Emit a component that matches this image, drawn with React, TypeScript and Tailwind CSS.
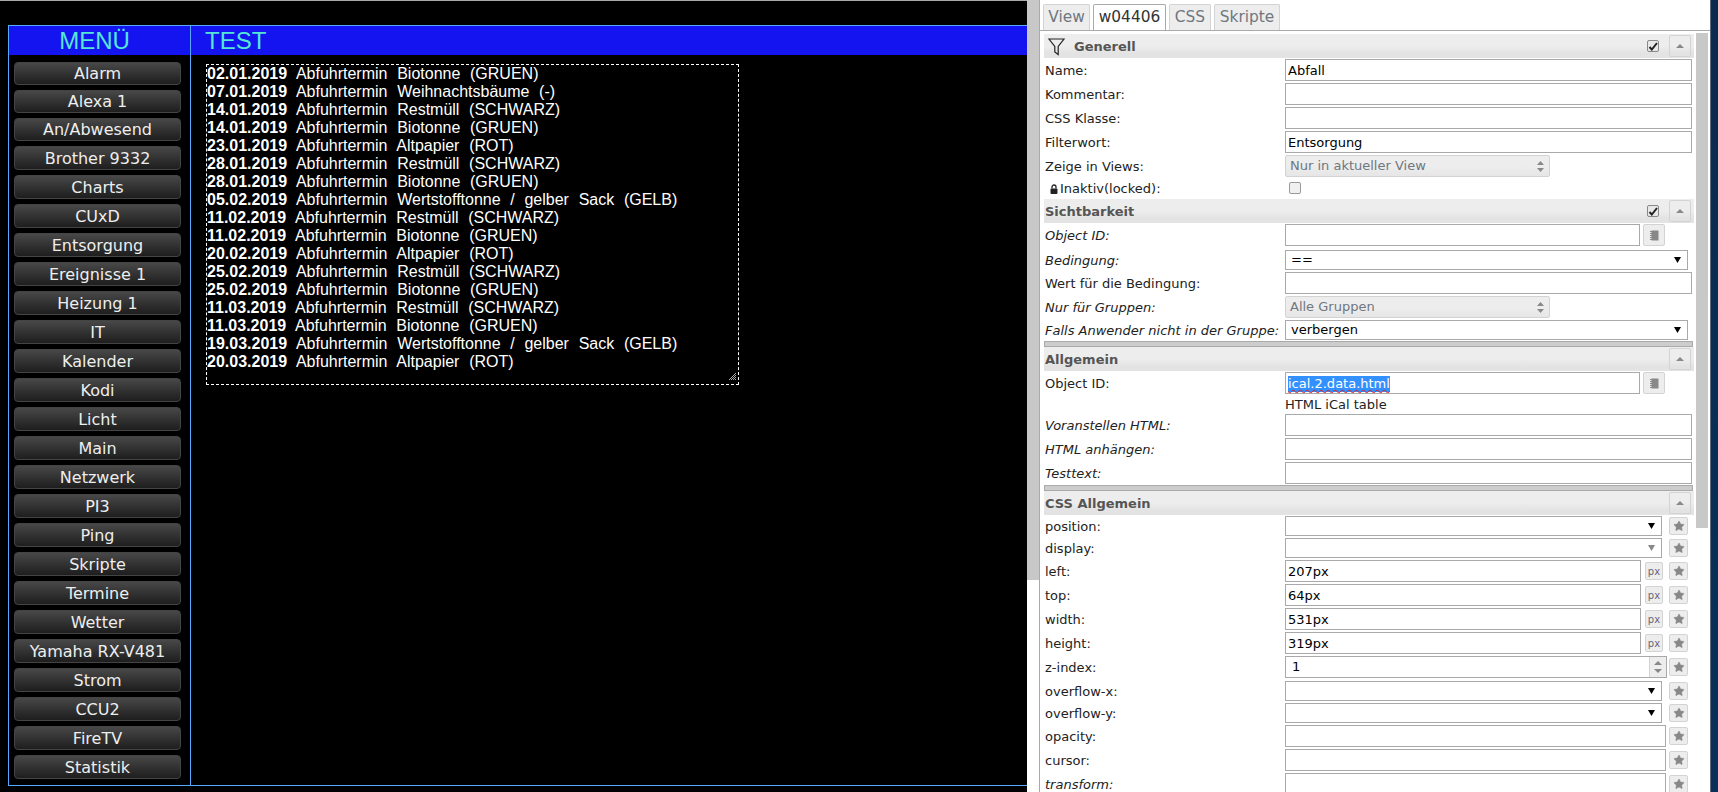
import type { ReactNode } from "react";
import { Star } from "lucide-react";

const MENU_ITEMS = [
  "Alarm",
  "Alexa 1",
  "An/Abwesend",
  "Brother 9332",
  "Charts",
  "CUxD",
  "Entsorgung",
  "Ereignisse 1",
  "Heizung 1",
  "IT",
  "Kalender",
  "Kodi",
  "Licht",
  "Main",
  "Netzwerk",
  "PI3",
  "Ping",
  "Skripte",
  "Termine",
  "Wetter",
  "Yamaha RX-V481",
  "Strom",
  "CCU2",
  "FireTV",
  "Statistik",
];

const DATES = [
  ["02.01.2019", "Biotonne  (GRUEN)"],
  ["07.01.2019", "Weihnachtsbäume  (-)"],
  ["14.01.2019", "Restmüll  (SCHWARZ)"],
  ["14.01.2019", "Biotonne  (GRUEN)"],
  ["23.01.2019", "Altpapier  (ROT)"],
  ["28.01.2019", "Restmüll  (SCHWARZ)"],
  ["28.01.2019", "Biotonne  (GRUEN)"],
  ["05.02.2019", "Wertstofftonne  /  gelber  Sack  (GELB)"],
  ["11.02.2019", "Restmüll  (SCHWARZ)"],
  ["11.02.2019", "Biotonne  (GRUEN)"],
  ["20.02.2019", "Altpapier  (ROT)"],
  ["25.02.2019", "Restmüll  (SCHWARZ)"],
  ["25.02.2019", "Biotonne  (GRUEN)"],
  ["11.03.2019", "Restmüll  (SCHWARZ)"],
  ["11.03.2019", "Biotonne  (GRUEN)"],
  ["19.03.2019", "Wertstofftonne  /  gelber  Sack  (GELB)"],
  ["20.03.2019", "Altpapier  (ROT)"],
];

function SmallButton({ children, className }: { children: ReactNode; className: string }) {
  return (
    <div
      className={`flex shrink-0 items-center justify-center rounded-[2px] border border-[#d3d3d3] bg-[#ededed] text-[#888] ${className}`}
    >
      {children}
    </div>
  );
}

function StarButton() {
  return (
    <SmallButton className="ml-auto mr-[6px] h-[18px] w-[19px]">
      <Star size={12} fill="#888" strokeWidth={1} />
    </SmallButton>
  );
}

function NoteButton() {
  return (
    <SmallButton className="ml-[3px] h-[22px] w-[22px]">
      <svg width="9" height="11" viewBox="0 0 9 11">
        <rect x="1.5" y="0.5" width="7" height="10" fill="#888" />
        <path d="M0 1.5h2M0 3.5h2M0 5.5h2M0 7.5h2M0 9.5h2" stroke="#888" strokeWidth="1" />
      </svg>
    </SmallButton>
  );
}

function Caret({ color = "#000" }: { color?: string }) {
  return (
    <svg width="7" height="6" viewBox="0 0 7 6" className="shrink-0">
      <polygon points="0,0 7,0 3.5,6" fill={color} />
    </svg>
  );
}

function TextField({ value, width, selected }: { value?: string; width: string; selected?: boolean }) {
  return (
    <div
      className={`flex h-[22px] shrink-0 items-center border border-[#a9a9a9] bg-white pl-[2px] pt-[1px] text-[13px] leading-[16px] text-black ${width}`}
    >
      {selected ? (
        <span className="bg-[#3390ff] text-white underline decoration-[#e02020] decoration-wavy decoration-1">
          {value}
        </span>
      ) : (
        value
      )}
    </div>
  );
}

function NativeSelect({ value, width, caret }: { value?: string; width: string; caret?: string }) {
  return (
    <div
      className={`flex h-[20px] shrink-0 items-center justify-between border border-[#a9a9a9] bg-white pl-[5px] pr-[6px] text-[13px] leading-[16px] text-black ${width}`}
    >
      <span>{value}</span>
      <Caret color={caret} />
    </div>
  );
}

function UiSelect({ value }: { value: string }) {
  return (
    <div className="flex h-[22px] w-[265px] shrink-0 items-center justify-between rounded-[2px] border border-[#d3d3d3] bg-gradient-to-b from-[#ededed] from-50% to-[#e6e6e6] pl-[4px] pr-[3px] text-[13px] leading-[16px] text-[#6f7780]">
      <span>{value}</span>
      <svg width="7" height="11" viewBox="0 0 7 11" className="mr-[2px]">
        <polygon points="3.5,0 7,4 0,4" fill="#888" />
        <polygon points="0,7 7,7 3.5,11" fill="#888" />
      </svg>
    </div>
  );
}

function Row({
  label,
  italic,
  className = "mt-[2px]",
  children,
}: {
  label: ReactNode;
  italic?: boolean;
  className?: string;
  children?: ReactNode;
}) {
  return (
    <div className={`flex items-center ${className}`}>
      <div
        className={`w-[241px] shrink-0 pl-[1px] pt-[1px] text-[13px] leading-[18px] text-[#222] ${
          italic ? "italic" : ""
        }`}
      >
        {label}
      </div>
      {children}
    </div>
  );
}

function SectionHeader({
  title,
  checked,
  filter,
  className = "",
}: {
  title: string;
  checked?: boolean;
  filter?: boolean;
  className?: string;
}) {
  return (
    <div
      className={`flex h-[24px] items-center bg-gradient-to-b from-[#ededed] from-50% to-[#e3e3e3] to-80% pl-[1px] text-[13px] font-bold text-[#555] ${className}`}
    >
      {filter ? (
        <svg width="17" height="18" viewBox="0 0 17 18" className="ml-[3px] mr-[9px] mt-[1px] shrink-0">
          <path d="M1 1 H16 L10.2 8.5 V16.5 L6.8 14 V8.5 Z" fill="none" stroke="#222" strokeWidth="1.2" />
        </svg>
      ) : null}
      <span className="pt-[1px]">{title}</span>
      {checked ? (
        <div className="ml-auto flex h-[12px] w-[12px] items-center justify-center rounded-[2px] border border-[#888] bg-[#e8e8e8]">
          <svg width="10" height="9" viewBox="0 0 10 9">
            <path d="M1.5 5 L3.8 7.5 L9 1" fill="none" stroke="#222" strokeWidth="2" />
          </svg>
        </div>
      ) : (
        <div className="ml-auto" />
      )}
      <div className="ml-[10px] mr-[3px] flex h-[22px] w-[22px] items-center justify-center rounded-[2px] border border-[#d3d3d3]">
        <svg width="8" height="4" viewBox="0 0 8 4">
          <polygon points="4,0 8,4 0,4" fill="#888" />
        </svg>
      </div>
    </div>
  );
}

function SplitBar() {
  return <div className="mt-[1px] h-[6px] w-[649px] border border-[#aaa] bg-[#ccc]" />;
}

function PxRow({ label, value }: { label: string; value: string }) {
  return (
    <Row label={label}>
      <TextField value={value} width="w-[356px]" />
      <SmallButton className="ml-[4px] h-[18px] w-[18px] text-[10px] !text-[#667]">px</SmallButton>
      <StarButton />
    </Row>
  );
}

function Tab({ label, width, active }: { label: string; width: string; active?: boolean }) {
  return (
    <div
      className={`flex h-[26px] items-center justify-center rounded-t-[2px] border border-b-0 text-[15.4px] ${width} ${
        active ? "border-[#aaa] bg-white text-[#333]" : "border-[#d3d3d3] bg-[#ededed] text-[#6f7780]"
      }`}
    >
      {label}
    </div>
  );
}

function PropertyPanel() {
  return (
    <div className="flex w-[671px] shrink-0 flex-col border-l border-[#aaa] bg-white [font-family:'DejaVu_Sans',sans-serif]">
      <div className="flex h-[31px] shrink-0 items-end gap-[3px] border-b border-[#aaa] pl-[3px]">
        <Tab label="View" width="w-[47px]" />
        <Tab label="w04406" width="w-[73px]" active />
        <Tab label="CSS" width="w-[42px]" />
        <Tab label="Skripte" width="w-[66px]" />
      </div>
      <div className="flex min-h-0 flex-1 overflow-hidden pt-[3px]">
        <div className="ml-[4px] w-[650px] shrink-0">
          <SectionHeader title="Generell" checked filter />
          <Row label="Name:" className="mt-[1px]">
            <TextField value="Abfall" width="w-[407px]" />
          </Row>
          <Row label="Kommentar:">
            <TextField width="w-[407px]" />
          </Row>
          <Row label="CSS Klasse:">
            <TextField width="w-[407px]" />
          </Row>
          <Row label="Filterwort:">
            <TextField value="Entsorgung" width="w-[407px]" />
          </Row>
          <Row label="Zeige in Views:">
            <UiSelect value="Nur in aktueller View" />
          </Row>
          <Row
            label={
              <span className="flex items-center pl-[5px]">
                <svg width="8" height="10" viewBox="0 0 8 10" className="mr-[2px] shrink-0">
                  <path d="M2 4.5 V3 A2 2 0 0 1 6 3 V4.5" fill="none" stroke="#222" strokeWidth="1.3" />
                  <rect x="0.5" y="4.5" width="7" height="5.5" rx="1" fill="#222" />
                </svg>
                Inaktiv(locked):
              </span>
            }
            className="mt-[2px] h-[18px]"
          >
            <div className="ml-[4px] h-[12px] w-[12px] rounded-[2px] border border-[#999] bg-[#f0f0f0]" />
          </Row>

          <SectionHeader title="Sichtbarkeit" checked className="mt-[2px]" />
          <Row label="Object ID:" italic className="mt-[1px]">
            <TextField width="w-[355px]" />
            <NoteButton />
          </Row>
          <Row label="Bedingung:" italic className="mt-[4px]">
            <NativeSelect value="==" width="w-[403px]" />
          </Row>
          <Row label="Wert für die Bedingung:">
            <TextField width="w-[407px]" />
          </Row>
          <Row label="Nur für Gruppen:" italic>
            <UiSelect value="Alle Gruppen" />
          </Row>
          <Row label="Falls Anwender nicht in der Gruppe:" italic>
            <NativeSelect value="verbergen" width="w-[403px]" />
          </Row>
          <SplitBar />

          <SectionHeader title="Allgemein" />
          <Row label="Object ID:" className="mt-[1px]">
            <TextField value="ical.2.data.html" width="w-[355px]" selected />
            <NoteButton />
          </Row>
          <div className="mt-[2px] flex h-[16px] items-center pl-[241px] pt-[1px] text-[13px] text-[#222]">
            HTML iCal table
          </div>
          <Row label="Voranstellen HTML:" italic>
            <TextField width="w-[407px]" />
          </Row>
          <Row label="HTML anhängen:" italic>
            <TextField width="w-[407px]" />
          </Row>
          <Row label="Testtext:" italic>
            <TextField width="w-[407px]" />
          </Row>
          <SplitBar />

          <SectionHeader title="CSS Allgemein" />
          <Row label="position:" className="mt-[1px]">
            <NativeSelect width="w-[377px]" />
            <StarButton />
          </Row>
          <Row label="display:">
            <NativeSelect width="w-[377px]" caret="#888" />
            <StarButton />
          </Row>
          <PxRow label="left:" value="207px" />
          <PxRow label="top:" value="64px" />
          <PxRow label="width:" value="531px" />
          <PxRow label="height:" value="319px" />
          <Row label="z-index:">
            <div className="flex h-[22px] w-[382px] shrink-0 items-center border border-[#a9a9a9] pl-[6px] text-[13px] text-black">
              1
              <div className="ml-auto flex h-full w-[17px] flex-col items-center justify-center gap-[4px] border-l border-[#d3d3d3] bg-[#ededed]">
                <svg width="8" height="4" viewBox="0 0 8 4">
                  <polygon points="4,0 8,4 0,4" fill="#888" />
                </svg>
                <svg width="8" height="4" viewBox="0 0 8 4">
                  <polygon points="0,0 8,0 4,4" fill="#888" />
                </svg>
              </div>
            </div>
            <StarButton />
          </Row>
          <Row label="overflow-x:" className="mt-[3px]">
            <NativeSelect width="w-[377px]" />
            <StarButton />
          </Row>
          <Row label="overflow-y:">
            <NativeSelect width="w-[377px]" />
            <StarButton />
          </Row>
          <Row label="opacity:">
            <TextField width="w-[381px]" />
            <StarButton />
          </Row>
          <Row label="cursor:">
            <TextField width="w-[381px]" />
            <StarButton />
          </Row>
          <Row label="transform:" italic>
            <TextField width="w-[381px]" />
            <StarButton />
          </Row>
        </div>
        <div className="ml-[2px] -mt-[1px] h-[495px] w-[12px] shrink-0 bg-[#c8c8c8]" />
      </div>
    </div>
  );
}

function MenuButton({ label, short }: { label: string; short: boolean }) {
  return (
    <div
      className={`mt-[5px] flex items-center justify-center rounded-[4px] border border-[#444] bg-gradient-to-b from-[#484848] to-[#1e1e1e] pt-[1px] text-[16px] text-[#eee] [font-family:'DejaVu_Sans',sans-serif] ${
        short ? "h-[23px]" : "h-[24px]"
      }`}
    >
      {label}
    </div>
  );
}

export default function App() {
  return (
    <div className="flex h-[792px] w-[1718px] flex-col overflow-hidden bg-black [font-family:'Liberation_Sans',Arial,sans-serif]">
      <div className="flex min-h-0 flex-1">
        <div className="flex w-[1027px] shrink-0 flex-col border-t border-[#aaa] pb-[6px] pl-[8px] pt-[24px]">
          <div className="flex min-h-0 flex-1 border-b border-l border-t border-[#55aaff]">
            <div className="flex w-[182px] shrink-0 flex-col border-r border-[#55aaff]">
              <div className="flex h-[29px] shrink-0 items-center justify-center bg-[#1414f0] pr-[10px] text-[24px] text-[#55e6d6]">
                MENÜ
              </div>
              <div className="flex flex-col pl-[5px] pr-[9px] pt-[2px]">
                {MENU_ITEMS.map((item, i) => (
                  <MenuButton key={item} label={item} short={i < 3} />
                ))}
              </div>
            </div>
            <div className="flex min-w-0 flex-1 flex-col">
              <div className="flex h-[29px] shrink-0 items-center bg-[#1414f0] pl-[14px] text-[24px] text-[#55e6d6]">
                TEST
              </div>
              <div className="relative ml-[15px] mt-[9px] h-[321px] w-[533px] border border-dashed border-white text-[16px] leading-[18px] text-white [word-spacing:0.4px]">
                {DATES.map(([date, text], i) => (
                  <div key={i} className="whitespace-pre">
                    <span className="font-bold">{date}</span>
                    {"  Abfuhrtermin  "}
                    {text}
                  </div>
                ))}
                <svg width="7" height="7" viewBox="0 0 7 7" className="absolute bottom-[4px] right-[2px]">
                  <path d="M0 7 L7 0 M2 7 L7 2 M4 7 L7 4 M6 7 L7 6" stroke="#aaa" strokeWidth="1" />
                </svg>
              </div>
            </div>
          </div>
        </div>
        <div className="h-full w-[12px] shrink-0 bg-white">
          <div className="h-[580px] bg-[#c8c8c8]" />
        </div>
        <PropertyPanel />
        <div className="w-[8px] shrink-0 border-l border-[#5a6a7a] bg-gradient-to-b from-[#0a2a4e] to-[#08305a]" />
      </div>
    </div>
  );
}
